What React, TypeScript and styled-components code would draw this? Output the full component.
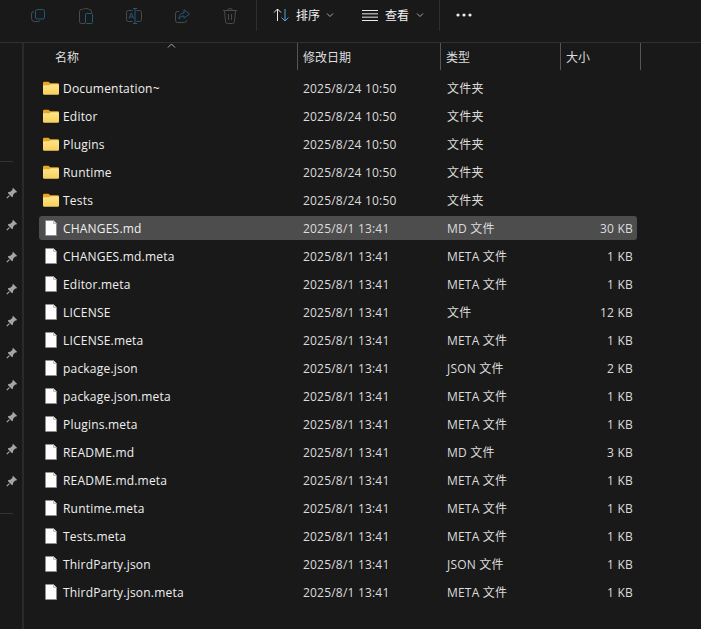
import React from "react";
import styled, { createGlobalStyle } from "styled-components";

const Global = createGlobalStyle`
  html, body { margin: 0; padding: 0; background: #191919; }
  body { font-family: "Open Sans", "Noto Sans CJK SC", sans-serif; }
`;

const Page = styled.div`
  width: 701px; height: 629px; background: #191919; color: #f2f2f2;
  overflow: hidden; display: flex; flex-direction: column; font-size: 12px;
`;
const Toolbar = styled.div`
  height: 42px; flex: none; border-bottom: 1px solid #303030; display: flex; align-items: flex-start;
  padding-left: 28px; box-sizing: content-box;
`;
const ToolGroup = styled.div`display: flex; gap: 28px; margin-right: 16px;`;
const ToolIcon = styled.div`
  width: 20px; height: 31px; display: flex; align-items: center; justify-content: center;
`;
const Sep = styled.div<{ $left?: number }>`
  width: 1px; height: 31px; background: #2f2f2f; flex: none; margin-left: ${(p) => p.$left ?? 0}px;
`;
const Menu = styled.div<{ $left: number; $gap?: number }>`
  display: flex; align-items: center; height: 30px; gap: ${(p) => p.$gap ?? 6}px; margin-left: ${(p) => p.$left}px;
  font-size: 12px; color: #f2f2f2;
`;
const Body = styled.div`flex: 1; display: flex; min-height: 0;`;
const Side = styled.div`
  width: 22px; flex: none; border-right: 2px solid #2a2a2a; display: flex; flex-direction: column; padding-top: 118px;
`;
const SideRule = styled.div`width: 13px; height: 1px; background: #333; flex: none;`;
const PinList = styled.div`display: flex; flex-direction: column; padding: 15px 0 16px;`;
const Pin = styled.div`height: 32px; width: 24px; display: flex; align-items: center; justify-content: center; flex: none;`;
const Main = styled.div`flex: 1; padding-left: 15px; min-width: 0;`;
const Header = styled.div`
  height: 27px; display: grid; grid-template-columns: 259px 143px 120px 80px; position: relative; color: #dedede;
  width: 602px;
`;
const HeadCell = styled.div<{ $first?: boolean }>`
  border-right: 1px solid #555; display: flex; align-items: center;
  padding-left: ${(p) => (p.$first ? 16 : 5)}px; height: 27px; box-sizing: border-box;
`;
const Sort = styled.svg`position: absolute; left: 128px; top: 0;`;
const Row = styled.div<{ $sel?: boolean }>`
  height: 24px; margin-top: 4px; width: 598px; display: grid; grid-template-columns: 257px 144px 120px 73px 4px;
  align-items: center; border-radius: 3px; background: ${(p) => (p.$sel ? "#4d4d4d" : "transparent")};
`;
const NameCell = styled.div`
  display: flex; align-items: center; gap: 4px; padding-left: 4px; white-space: nowrap; letter-spacing: .2px; color: #f0f0f0;
`;
const IconBox = styled.div`width: 16px; height: 18px; display: flex; align-items: center; justify-content: center; flex: none;`;
const Cell = styled.div`padding-left: 7px; color: #dcdcdc; white-space: nowrap; letter-spacing: .2px;`;
const SizeCell = styled.div`text-align: right; color: #dcdcdc; white-space: nowrap; letter-spacing: .2px;`;
const RowList = styled.div`display: flex; flex-direction: column; padding-top: 2px;`;

const Folder = () => (
  <svg width="16" height="14" viewBox="0 0 16 14">
    <defs>
      <linearGradient id="fg" x1="0" y1="0" x2="0" y2="1">
        <stop offset="0" stopColor="#fde68a" />
        <stop offset="1" stopColor="#f9cf5c" />
      </linearGradient>
    </defs>
    <path d="M0 2a1.200 1.200 0 0 1 1.200-1.200h4.300l1.800 1.500h7.500A1.200 1.200 0 0 1 16 3.500V6H0z" fill="#e8a623" />
    <path d="M0 4.200h6.400l1.500-1h6.900A1.200 1.200 0 0 1 16 4.400v8.200a1.200 1.200 0 0 1-1.200 1.200H1.200A1.200 1.200 0 0 1 0 12.600z" fill="url(#fg)" />
  </svg>
);
const FileI = () => (
  <svg width="12" height="16" viewBox="0 0 12 16">
    <path d="M.5 1A.5.500 0 0 1 1 .5h7.500l3 3V15.500H1a.5.500 0 0 1-.5-.5z" fill="#fdfdfd" stroke="#8f8f8f" />
    <path d="M8.500.5v3h3" fill="#e4e4e4" stroke="#b0b0b0" strokeWidth=".8" />
  </svg>
);
const PinI = () => (
  <svg width="12" height="12" viewBox="0 0 12 12">
    <path d="M7 .8l4.200 4.200-1.200.6-.6-.2L7.200 7.600 7 9.600 6 10.200 1.800 6l.6-1 2-.2 2.200-2.200-.2-.6z" fill="#a0a6aa" />
    <path d="M3.400 8.600L.8 11.200" stroke="#a0a6aa" strokeWidth="1.200" />
  </svg>
);

const folders = ["Documentation~", "Editor", "Plugins", "Runtime", "Tests"];
const files: [string, string, string, string][] = [
  ["CHANGES.md", "MD 文件", "30 KB", "s"],
  ["CHANGES.md.meta", "META 文件", "1 KB", ""],
  ["Editor.meta", "META 文件", "1 KB", ""],
  ["LICENSE", "文件", "12 KB", ""],
  ["LICENSE.meta", "META 文件", "1 KB", ""],
  ["package.json", "JSON 文件", "2 KB", ""],
  ["package.json.meta", "META 文件", "1 KB", ""],
  ["Plugins.meta", "META 文件", "1 KB", ""],
  ["README.md", "MD 文件", "3 KB", ""],
  ["README.md.meta", "META 文件", "1 KB", ""],
  ["Runtime.meta", "META 文件", "1 KB", ""],
  ["Tests.meta", "META 文件", "1 KB", ""],
  ["ThirdParty.json", "JSON 文件", "1 KB", ""],
  ["ThirdParty.json.meta", "META 文件", "1 KB", ""],
];

const Chevron = () => (
  <svg width="8" height="6" viewBox="0 0 8 6" fill="none"><path d="M1 1.500l3 3 3-3" stroke="#aaa" /></svg>
);

export default function App() {
  return (
    <Page>
      <Global />
      <Toolbar>
        <ToolGroup>
          <ToolIcon>
            <svg width="14" height="13" viewBox="0 0 14 13" fill="none">
              <rect x="4.500" y=".5" width="9" height="9.500" rx="2" stroke="#1f5a7c" />
              <path d="M3 2.500A2.500 2.500 0 0 0 .5 5v4.500a3 3 0 0 0 3 3H7A2.500 2.500 0 0 0 9 11.500" stroke="#4a4a4a" />
            </svg>
          </ToolIcon>
          <ToolIcon>
            <svg width="14" height="16" viewBox="0 0 14 16" fill="none">
              <path d="M3.500 1.500H2.500a2 2 0 0 0-2 2v10a2 2 0 0 0 2 2H6M10 1.500h.5a2 2 0 0 1 2 2V5" stroke="#4a4a4a" />
              <path d="M3.500 1.500c0-1.300 6.500-1.300 6.500 0" stroke="#4a4a4a" />
              <rect x="6.500" y="5.500" width="7" height="10" rx="1" stroke="#1f5a7c" />
            </svg>
          </ToolIcon>
          <ToolIcon>
            <svg width="16" height="16" viewBox="0 0 16 16" fill="none">
              <path d="M6.500 2.500H2.500a2 2 0 0 0-2 2v7a2 2 0 0 0 2 2h4M10.500 2.500h3a2 2 0 0 1 2 2v7a2 2 0 0 1-2 2h-3" stroke="#4a4a4a" />
              <path d="M3 10.500L5.300 5l2.300 5.500M3.800 9h3" stroke="#1f5a7c" />
              <path d="M7 .5h4M9 .5v15M7 15.500h4" stroke="#1f5a7c" />
            </svg>
          </ToolIcon>
          <ToolIcon>
            <svg width="15" height="14" viewBox="0 0 15 14" fill="none">
              <path d="M4 2.500H2.500a2 2 0 0 0-2 2v7a2 2 0 0 0 2 2h7a2 2 0 0 0 2-2V11" stroke="#4a4a4a" />
              <path d="M9 .8l5.500 4.200L9 9.200V7C6.800 7 5.200 7.800 4 10c0-3.500 2-6 5-6z" stroke="#1f5a7c" />
            </svg>
          </ToolIcon>
          <ToolIcon>
            <svg width="14" height="16" viewBox="0 0 14 16" fill="none" stroke="#4a4a4a">
              <path d="M0 2.500h14M4.500 2.500a2.500 2 0 0 1 5 0M1.500 2.500l1 11a2 2 0 0 0 2 2h5a2 2 0 0 0 2-2l1-11M5.500 6v6M8.500 6v6" />
            </svg>
          </ToolIcon>
        </ToolGroup>
        <Sep />
        <Menu $left={16}>
          <svg width="17" height="14" viewBox="0 0 17 14" fill="none">
            <path d="M4.500 13V1M1 4.500L4.500 1 8 4.500" stroke="#e8e8e8" />
            <path d="M12 1v12M8.500 9.500L12 13l3.500-3.500" stroke="#4ba6e0" />
          </svg>
          <span>排序</span>
          <Chevron />
        </Menu>
        <Menu $left={28} $gap={7}>
          <svg width="16" height="11" viewBox="0 0 16 11" fill="none" stroke="#e8e8e8"><path d="M0 .5h16M0 3.830h16M0 7.170h16M0 10.500h16" /></svg>
          <span>查看</span>
          <Chevron />
        </Menu>
        <Sep $left={15} />
        <Menu $left={16}>
          <svg width="16" height="4" viewBox="0 0 16 4" fill="#eee"><circle cx="2" cy="2" r="1.600" /><circle cx="8" cy="2" r="1.600" /><circle cx="14" cy="2" r="1.600" /></svg>
        </Menu>
      </Toolbar>
      <Body>
        <Side>
          <SideRule />
          <PinList>
            {Array.from({ length: 10 }).map((_, i) => (
              <Pin key={i}><PinI /></Pin>
            ))}
          </PinList>
          <SideRule />
        </Side>
        <Main>
          <Header>
            <Sort width="9" height="5" viewBox="0 0 9 5" fill="none"><path d="M1 4.500l3.500-3.500L8 4.500" stroke="#aaa" /></Sort>
            <HeadCell $first>名称</HeadCell>
            <HeadCell>修改日期</HeadCell>
            <HeadCell>类型</HeadCell>
            <HeadCell>大小</HeadCell>
          </Header>
          <RowList>
            {folders.map((n) => (
              <Row key={n}>
                <NameCell><IconBox><Folder /></IconBox>{n}</NameCell>
                <Cell>2025/8/24 10:50</Cell>
                <Cell>文件夹</Cell>
              </Row>
            ))}
            {files.map(([n, t, s, sel]) => (
              <Row key={n} $sel={!!sel}>
                <NameCell><IconBox><FileI /></IconBox>{n}</NameCell>
                <Cell>2025/8/1 13:41</Cell>
                <Cell>{t}</Cell>
                <SizeCell>{s}</SizeCell>
              </Row>
            ))}
          </RowList>
        </Main>
      </Body>
    </Page>
  );
}
